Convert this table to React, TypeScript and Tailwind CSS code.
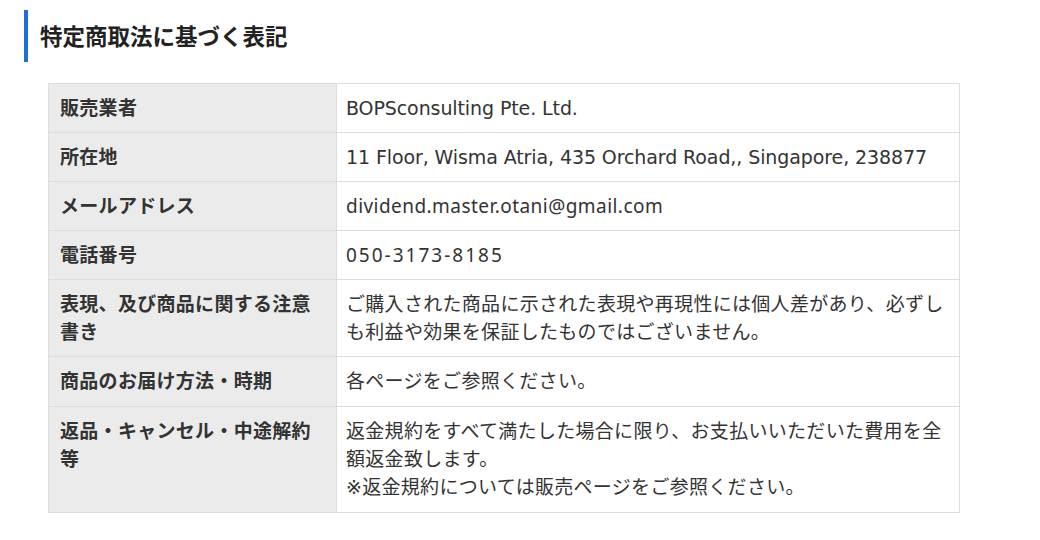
const JP = "font-['DejaVu_Sans','Noto_Sans_CJK_JP',sans-serif]";

type Row = { label: string; value: React.ReactNode; pb?: string };

const rows: Row[] = [
  { label: "販売業者", value: <span className="tracking-[-0.1px]">BOPSconsulting Pte. Ltd.</span> },
  {
    label: "所在地",
    value: <span className="tracking-[-0.1px]">11 Floor, Wisma Atria, 435 Orchard Road,, Singapore, 238877</span>,
  },
  {
    label: "メールアドレス",
    value: <span className="font-['Noto_Sans',sans-serif] tracking-[0.45px]">dividend.master.otani@gmail.com</span>,
  },
  {
    label: "電話番号",
    value: <span className="font-['Noto_Sans',sans-serif] tracking-[2px]">050-3173-8185</span>,
  },
  {
    label: "表現、及び商品に関する注意書き",
    value: "ご購入された商品に示された表現や再現性には個人差があり、必ずしも利益や効果を保証したものではございません。",
  },
  { label: "商品のお届け方法・時期", value: "各ページをご参照ください。", pb: "pb-[11px]" },
  {
    label: "返品・キャンセル・中途解約等",
    value: (
      <>
        返金規約をすべて満たした場合に限り、お支払いいただいた費用を全額返金致します。
        <br />
        ※返金規約については販売ページをご参照ください。
      </>
    ),
    pb: "pb-[11px]",
  },
];

export default function App() {
  return (
    <div className={`min-h-[540px] w-[1040px] bg-white pl-6 pt-[10px] text-[#333] ${JP}`}>
      <h2 className="flex h-[52px] items-center border-l-4 border-[#1b6fd6] pl-3 font-['Noto_Sans_CJK_JP',sans-serif] text-[22.5px] font-bold text-[#222]">
        特定商取法に基づく表記
      </h2>

      <table className="ml-6 mt-[21px] w-[912px] table-fixed border-collapse border border-[#ddd] text-[19px] leading-[28px] tracking-[0.3px]">
        <tbody>
          {rows.map((r) => (
            <tr key={r.label}>
              <th
                className={`w-[288px] border border-[#ddd] bg-[#ebebeb] px-[11px] pt-[10px] text-left align-top font-bold text-[#333] ${r.pb ?? "pb-[10px]"}`}
              >
                {r.label}
              </th>
              <td className={`border border-[#ddd] px-[9px] pt-[10px] align-top ${r.pb ?? "pb-[10px]"}`}>{r.value}</td>
            </tr>
          ))}
        </tbody>
      </table>
    </div>
  );
}
